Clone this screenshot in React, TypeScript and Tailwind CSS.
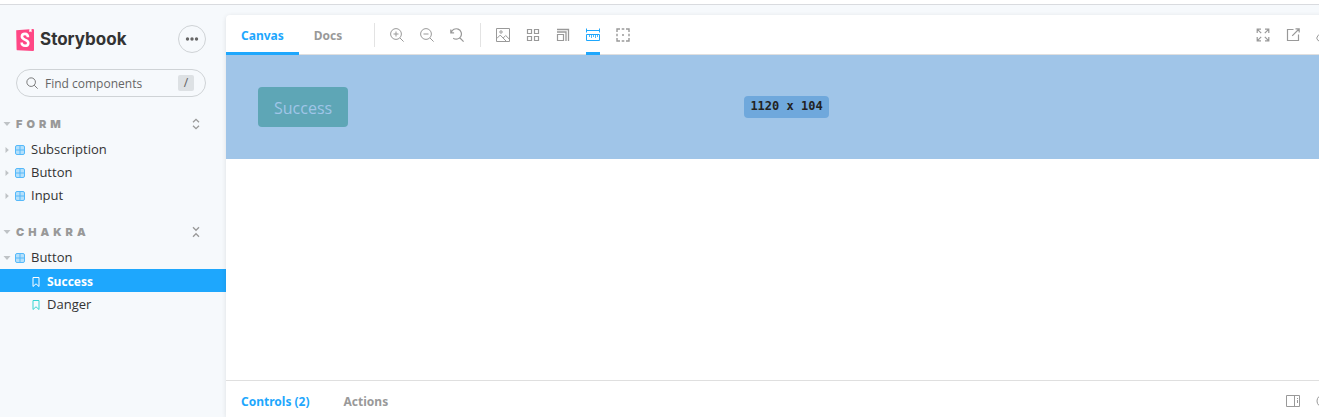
import type { ReactNode } from 'react';

type IconProps = { children: ReactNode; className?: string };

function Icon({ children, className = 'size-[14px]' }: IconProps) {
  return (
    <svg viewBox="0 0 14 14" fill="none" stroke="currentColor" className={className} aria-hidden="true">
      {children}
    </svg>
  );
}

const icons = {
  zoomIn: (
    <>
      <circle cx="6" cy="6" r="5.4" />
      <path d="M10 10l3.6 3.6M3.5 6h5M6 3.5v5" />
    </>
  ),
  zoomOut: (
    <>
      <circle cx="6" cy="6" r="5.4" />
      <path d="M10 10l3.6 3.6M3.5 6h5" />
    </>
  ),
  zoomReset: <path d="M.8 1.5v3.3h3.3M1.2 4.6A5.2 5.2 0 1 1 3.2 10.2M10 10l3.6 3.6" strokeWidth="1.2" />,
  image: (
    <>
      <path d="M.5 .5h13v13H.5zM.8 10.5l3.4-3.4L10 13M7.2 10L9.7 7.5l3.6 3.6" />
      <circle cx="5" cy="4" r="1.2" />
    </>
  ),
  grid: <path d="M1.5 1.5h4v4h-4zM8.5 1.5h4v4h-4zM1.5 8.5h4v4h-4zM8.5 8.5h4v4h-4z" strokeWidth="1.2" />,
  viewport: (
    <>
      <path d="M1.5 6.5h6v6h-6z" strokeWidth="1.2" />
      <path d="M1 1.5h11.5V13M1 4h9v9" strokeWidth="1.3" />
    </>
  ),
  measure: (
    <>
      <path d="M.5 .5v4M13.5 .5v4M1 2.5h12M.5 6.5h13v6H.5z" />
      <path d="M3.5 7v2M5.5 7v3M7.5 7v2M9.5 7v3M11.5 7v2" strokeWidth=".8" />
    </>
  ),
  outline: (
    <>
      <path
        d="M1 4V1h3M10 1h3v3M13 10v3h-3M4 13H1v-3M5.7 1h2.6M5.7 13h2.6M1 5.7v2.6M13 5.7v2.6"
        strokeWidth="1.4"
      />
      <circle cx="7" cy="7" r="1" fill="currentColor" stroke="none" />
    </>
  ),
  expand: (
    <path
      d="M1.2 5V1.2H5M1.2 1.2l4 4M9 1.2h3.8V5M12.8 1.2l-4 4M12.8 9v3.8H9M12.8 12.8l-4-4M5 12.8H1.2V9M1.2 12.8l4-4"
      strokeWidth="1.2"
    />
  ),
  share: <path d="M7.5 1.5h-6v11h11v-6M9.5 .8h3.7v3.7M13 1L6.2 7.8" strokeWidth="1.2" />,
  link: (
    <path d="M6 3.5l1.8-1.8a3 3 0 0 1 4.4 4.4L10 8.3a3 3 0 0 1-4.3 0M8 10.5l-1.8 1.8a3 3 0 0 1-4.4-4.4L4 5.7a3 3 0 0 1 4.3 0" />
  ),
  sidebar: <path d="M.5 1.5h13v11H.5zM8.5 1.5v11M11.5 4v1M11.5 6v3" />,
  close: (
    <>
      <circle cx="7" cy="7" r="6" />
      <path d="M4.5 4.5l5 5M9.5 4.5l-5 5" />
    </>
  ),
  search: (
    <>
      <circle cx="6" cy="6" r="5" />
      <path d="M9.6 9.6l4 4" />
    </>
  ),
  expandAll: <path d="M3.5 5L7 1.5 10.5 5M3.5 9L7 12.5 10.5 9" strokeWidth="1.5" />,
  collapseAll: <path d="M3.5 1.5L7 5l3.5-3.5M3.5 12.5L7 9l3.5 3.5" strokeWidth="1.5" />,
};

function ToolButton({ label, icon, active = false }: { label: string; icon: ReactNode; active?: boolean }) {
  return (
    <button
      type="button"
      aria-label={label}
      aria-pressed={active}
      className={`flex h-10 w-7 shrink-0 items-center justify-center ${active ? 'text-[#1ea7fd]' : 'text-[#999999]'}`}
    >
      <span className={`flex h-full items-center border-y-3 border-transparent ${active ? 'border-b-[#1ea7fd]' : ''}`}>
        <Icon className="size-[14px]">{icon}</Icon>
      </span>
    </button>
  );
}

function Tab({ label, active = false, underline = false }: { label: string; active?: boolean; underline?: boolean }) {
  return (
    <button
      type="button"
      role="tab"
      aria-selected={active}
      className={`h-10 shrink-0 border-y-3 border-t-transparent px-[15px] pt-px text-[12px] font-bold ${
        active ? 'text-[#1ea7fd]' : 'text-[#999999]'
      } ${underline ? 'border-b-[#1ea7fd]' : 'border-b-transparent'}`}
    >
      {label}
    </button>
  );
}

function Caret({ open = false }: { open?: boolean }) {
  return (
    <svg viewBox="0 0 8 8" className="size-2 shrink-0 fill-[#bfc3c6]" aria-hidden="true">
      <path d={open ? 'M.5 2h7L4 6z' : 'M2.5 1v6L5.8 4z'} />
    </svg>
  );
}

function ComponentRow({ label, open = false }: { label: string; open?: boolean }) {
  return (
    <button type="button" aria-expanded={open} className="flex h-[23px] w-full items-center pl-[3px] text-left">
      <Caret open={open} />
      <svg viewBox="0 0 10 10" className="ml-1 mr-[6px] size-[10px] shrink-0" aria-hidden="true">
        <rect x=".5" y=".5" width="9" height="9" rx="1.5" fill="#b5e0fb" stroke="#56b9fa" />
        <path d="M5 1v8M1 5h8" stroke="#56b9fa" />
      </svg>
      {label}
    </button>
  );
}

function StoryRow({ label, active = false }: { label: string; active?: boolean }) {
  return (
    <a
      href="#story"
      aria-current={active ? 'page' : undefined}
      className={`flex h-[23px] items-center pl-8 pt-[2px] ${active ? 'bg-[#1ea7fd] text-[12px] font-bold text-white' : ''}`}
    >
      <svg
        viewBox="0 0 8 10"
        fill="none"
        className={`mr-[7px] h-[10px] w-2 shrink-0 ${active ? 'stroke-white' : 'stroke-[#37d5d3]'}`}
        aria-hidden="true"
      >
        <path d="M1 .5h6v9L4 6.8 1 9.5z" />
      </svg>
      {label}
    </a>
  );
}

function GroupHeader({ label, icon, action }: { label: string; icon: ReactNode; action: string }) {
  return (
    <div className="flex h-7 items-center pl-[3px] pr-5 text-[#999999]">
      <button type="button" className="flex items-center gap-[5px] font-['Inter'] text-[11px] font-black tracking-[4px]">
        <Caret open />
        {label}
      </button>
      <button type="button" aria-label={action} className="ml-auto p-1">
        <Icon className="size-[12px]">{icon}</Icon>
      </button>
    </div>
  );
}

function Sidebar() {
  return (
    <nav className="w-[226px] shrink-0 pt-5 font-['Open_Sans'] text-[13px] text-[#333333]">
      <div className="flex items-center justify-between pl-4 pr-5">
        <a href="#home" className="flex items-center gap-[6px] pt-px font-['Inter'] text-[17px] font-bold text-[#333333]">
          <svg viewBox="0 0 18 22" className="h-[22px] w-[18px]" aria-hidden="true">
            <path d="M.2 1.2L17 .1a1 1 0 0 1 1 1V21a1 1 0 0 1-1 1L1.6 21.3a1 1 0 0 1-1-.9z" fill="#ff4785" />
            <path d="M13.3 .3l2.2-.2.1 3.1-1.2-.8-1.2.6z" fill="#fff" />
            <path
              d="M12 8.2C12 5.8 10.8 4.9 9 4.9S5.9 5.9 5.9 7.6c0 4 6.4 2.5 6.4 6.3 0 1.7-1.2 2.9-3.3 2.9s-3.4-1.2-3.3-3.3"
              fill="none"
              stroke="#fff"
              strokeWidth="2.6"
            />
          </svg>
          Storybook
        </a>
        <button
          type="button"
          aria-label="Shortcuts"
          className="flex size-7 items-center justify-center rounded-full border border-[#cfd3d6] text-[#666666]"
        >
          <Icon>
            <g fill="currentColor" stroke="none">
              <circle cx="2.5" cy="7" r="1.7" />
              <circle cx="7" cy="7" r="1.7" />
              <circle cx="11.5" cy="7" r="1.7" />
            </g>
          </Icon>
        </button>
      </div>
      <label className="ml-4 mr-5 mt-4 flex h-7 items-center rounded-full border border-[#cfd3d6] pl-[9px] pr-[11px] text-[#666666]">
        <Icon className="size-[12px] shrink-0">{icons.search}</Icon>
        <input
          type="text"
          aria-label="Find components"
          placeholder="Find components"
          className="ml-[7px] w-0 flex-1 bg-transparent pt-px text-[12px] outline-none placeholder:text-[#666666]"
        />
        <kbd className="flex size-4 items-center justify-center rounded-[2px] bg-[#dde1e4] font-['Noto_Sans'] text-[12px]">
          /
        </kbd>
      </label>
      <div className="mt-[13px]">
        <GroupHeader label="FORM" icon={icons.expandAll} action="Expand all" />
        <ComponentRow label="Subscription" />
        <ComponentRow label="Button" />
        <ComponentRow label="Input" />
      </div>
      <div className="mt-[11px]">
        <GroupHeader label="CHAKRA" icon={icons.collapseAll} action="Collapse all" />
        <ComponentRow label="Button" open />
        <StoryRow label="Success" active />
        <StoryRow label="Danger" />
      </div>
    </nav>
  );
}

function Separator() {
  return <span className="ml-[9px] mr-2 mt-2 h-6 w-px shrink-0 bg-[#e3e3e3]" />;
}

function Preview() {
  return (
    <main className="-mr-7 mt-[10px] flex min-w-0 flex-1 flex-col overflow-hidden rounded-tl-[4px] bg-white shadow-[0_1px_5px_0_rgba(0,0,0,0.1)]">
      <div className="flex h-10 shrink-0 items-start border-b border-[#dfdfdf] pr-[10px]">
        <Tab label="Canvas" active underline />
        <Tab label="Docs" />
        <span className="w-2" />
        <Separator />
        <div className="flex gap-[2px]">
          <ToolButton label="Zoom in" icon={icons.zoomIn} />
          <ToolButton label="Zoom out" icon={icons.zoomOut} />
          <ToolButton label="Reset zoom" icon={icons.zoomReset} />
        </div>
        <Separator />
        <div className="flex gap-[2px]">
          <ToolButton label="Background" icon={icons.image} />
          <ToolButton label="Grid" icon={icons.grid} />
          <ToolButton label="Viewport" icon={icons.viewport} />
          <ToolButton label="Measure" icon={icons.measure} active />
          <ToolButton label="Outline" icon={icons.outline} />
        </div>
        <div className="ml-auto flex gap-[2px]">
          <ToolButton label="Full screen" icon={icons.expand} />
          <ToolButton label="Open in new tab" icon={icons.share} />
          <ToolButton label="Copy link" icon={icons.link} />
        </div>
      </div>
      <div className="flex-1">
        <div className="grid grid-cols-[1fr_auto_1fr] items-center bg-[#a0c5e8] p-8">
          <button
            type="button"
            className="h-10 justify-self-start rounded-[4px] bg-[#5ea6b6] px-4 pt-[2px] font-['Open_Sans'] text-[16px] text-[#a0c5e8]"
          >
            Success
          </button>
          <span className="rounded-[4px] bg-[#6fa8dc] px-[6px] pt-[2px] pb-1 font-['DejaVu_Sans_Mono'] text-[12px] leading-4 font-bold text-[#222222]">
            1120 x 104
          </span>
        </div>
      </div>
      <div className="h-[37px] shrink-0 overflow-hidden border-t border-[#dfdfdf]">
        <div className="flex h-10 items-center pr-[10px]">
          <div className="flex gap-1">
            <Tab label="Controls (2)" active />
            <Tab label="Actions" />
          </div>
          <div className="ml-auto flex gap-[2px]">
            <ToolButton label="Change orientation" icon={icons.sidebar} />
            <ToolButton label="Hide addons" icon={icons.close} />
          </div>
        </div>
      </div>
    </main>
  );
}

export default function App() {
  return (
    <div className="flex h-screen flex-col overflow-hidden bg-[#f6f9fc] font-['Noto_Sans',sans-serif]">
      <div className="h-[5px] shrink-0 border-b border-[#d9dbdf] bg-white" />
      <div className="flex min-h-0 flex-1">
        <Sidebar />
        <Preview />
      </div>
    </div>
  );
}
